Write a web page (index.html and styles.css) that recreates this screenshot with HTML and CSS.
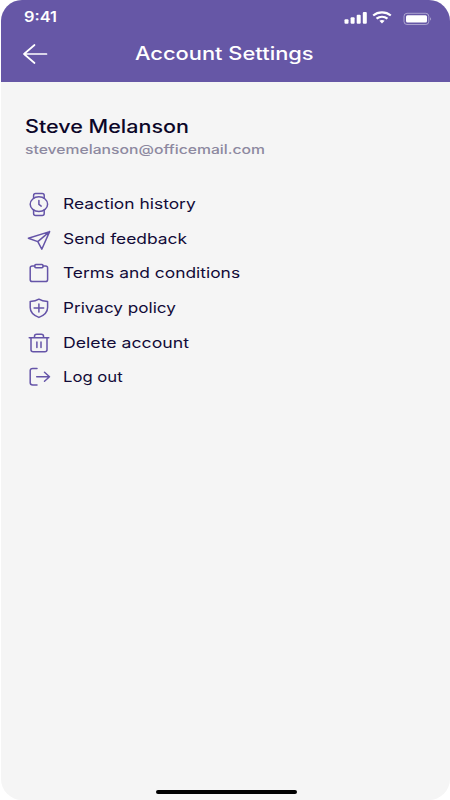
FILE: index.html
```html
<!DOCTYPE html>
<html lang="en">
<head>
    <meta charset="UTF-8">
    <meta name="viewport" content="width=device-width, initial-scale=1.0">
    <title>Account Settings</title>
    <link rel="stylesheet" href="styles.css">
</head>
<body>
    <div class="screen">
        <!-- Header -->
        <header class="header">
            <div class="status-bar">
                <span class="time">9:41</span>
                <svg class="status-icons" width="90" height="16" viewBox="0 0 90 16">
                    <g fill="#fff">
                        <rect x="2.5" y="9.3" width="4" height="4.4" rx="1"/>
                        <rect x="8.6" y="7.2" width="4" height="6.5" rx="1"/>
                        <rect x="14.7" y="4.7" width="4" height="9" rx="1"/>
                        <rect x="20.8" y="2" width="4" height="11.7" rx="1"/>
                        <path d="M37.4 10.8c1.400-1.200 3.800-1.200 5.200 0l-2.600 2.600z"/>
                        <rect x="64" y="5.2" width="21" height="7.4" rx="1.5"/>
                        <path d="M88.2 7.2c1.2.5 1.2 2.8 0 3.3z" opacity=".5"/>
                    </g>
                    <path d="M31.200 5.500c5-4.200 12.600-4.200 17.600 0M34.500 8.700c3.200-2.500 7.800-2.500 11 0" fill="none" stroke="#fff" stroke-width="2.200"/>
                    <rect x="62" y="3.300" width="24.800" height="11.200" rx="3" fill="none" stroke="#fff" opacity=".45"/>
                </svg>
            </div>
            <div class="title-bar">
                <svg class="back" width="26" height="22" viewBox="0 0 26 22">
                    <path d="M24.500 11H2M12.500 2 2 11l10.500 9"/>
                </svg>
                <h1>Account Settings</h1>
            </div>
        </header>

        <!-- User -->
        <section class="user">
            <h2>Steve Melanson</h2>
            <p>stevemelanson@officemail.com</p>
        </section>

        <!-- Menu -->
        <ul class="menu">
            <li>
                <svg class="icon" viewBox="0 0 26 26">
                    <ellipse cx="12.900" cy="13.200" rx="8.700" ry="7.400"/>
                    <path d="M7.600 7.300V4.400q0-2 2-2h6.600q2 0 2 2v2.900M7.600 19.100V22.500q0 2 2 2h6.600q2 0 2-2v-3.400M12.900 9.500v3.900l2.300 1.700"/>
                </svg>
                <span class="reaction">Reaction history</span>
            </li>
            <li>
                <svg class="icon" viewBox="0 0 26 26">
                    <path d="M23.600 5.600 2.400 12.300l9.400 3.300 4 7.600zM23.600 5.600 11.800 15.600"/>
                </svg>
                <span class="feedback">Send feedback</span>
            </li>
            <li>
                <svg class="icon" viewBox="0 0 26 26">
                    <path d="M8.800 5.900H6.300q-2.100 0-2.100 1.800v12q0 1.800 2.100 1.800h13.200q2.100 0 2.100-1.800v-12q0-1.800-2.100-1.800H17"/>
                    <rect x="8.800" y="4.400" width="8.200" height="3.400" rx="1"/>
                </svg>
                <span class="terms">Terms and conditions</span>
            </li>
            <li>
                <svg class="icon" viewBox="0 0 26 26">
                    <path d="M12.900 4.200c-2.500 1.700-5.200 2.200-8.700 2.300v6c0 5.200 3.500 7.900 8.700 9.900 5.200-2 8.700-4.700 8.700-9.900v-6c-3.500-.1-6.200-.6-8.700-2.300zM12.900 8.900v8M8.100 12.900h9.600"/>
                </svg>
                <span class="privacy">Privacy policy</span>
            </li>
            <li>
                <svg class="icon" viewBox="0 0 26 26">
                    <path d="M3.200 7.700h19.600M5 7.700v12q0 2 2.200 2h11.600q2.200 0 2.200-2v-12M8.500 7.700V6.200q0-1.900 2.200-1.900h4.600q2.200 0 2.200 1.900v1.500M10.900 12v5.500M15 12v5.500"/>
                </svg>
                <span class="delete">Delete account</span>
            </li>
            <li>
                <svg class="icon" viewBox="0 0 26 26">
                    <path d="M11 4.400H6.800q-2.600 0-2.600 2.200v12.200q0 2.200 2.600 2.200H11M10.700 12.700h12.800M18.500 8.200l5 4.500-5 4.500"/>
                </svg>
                <span class="logout">Log out</span>
            </li>
        </ul>

        <div class="home-indicator"></div>
    </div>
</body>
</html>
```

FILE: styles.css
```css
* {
    margin: 0;
    padding: 0;
    box-sizing: border-box;
}

body {
    background-color: #fff;
    font-family: Inter, 'Noto Sans', sans-serif;
    color: #120b38;
}

.screen {
    display: flex;
    flex-direction: column;
    width: 449px;
    height: 800px;
    margin-left: 1px;
    background-color: #f5f5f5;
    border-radius: 21px;
    overflow: hidden;
}

/* Header */
.header {
    height: 82px;
    background-color: #6657a6;
    color: #fff;
}

.status-bar {
    display: flex;
    justify-content: space-between;
    height: 34px;
    padding: 7px 18px 0 22.500px;
}

.status-icons {
    margin-top: 3px;
}

.time,
.title-bar h1,
.user h2,
.user p,
.menu span {
    display: block;
    white-space: nowrap;
    transform-origin: left center;
}

.time {
    font-size: 14px;
    font-weight: 600;
    line-height: 20px;
    transform: scaleX(1.17);
}

.title-bar {
    display: flex;
    align-items: center;
    height: 40px;
    padding-left: 21px;
}

.back {
    fill: none;
    stroke: #fff;
    stroke-width: 1.7;
    stroke-linecap: round;
    stroke-linejoin: round;
}

.title-bar h1 {
    margin-left: 87px;
    font-size: 18px;
    font-weight: 500;
    line-height: 24px;
    transform: scaleX(1.215);
}

/* User */
.user {
    padding: 33px 24px 0;
}

.user h2 {
    font-size: 18px;
    font-weight: 500;
    line-height: 24px;
    color: #0c0628;
    transform: scaleX(1.195);
}

.user p {
    font-size: 12.5px;
    font-weight: 500;
    line-height: 20px;
    margin-top: 1px;
    color: #8d89a0;
    transform: scaleX(1.257);
}

/* Menu */
.menu {
    margin-top: 27px;
    padding-left: 25px;
    list-style: none;
}

.menu li {
    display: flex;
    align-items: center;
    height: 34.6px;
}

.icon {
    width: 26px;
    height: 26px;
    margin-right: 11px;
    fill: none;
    stroke: #6554a8;
    stroke-width: 1.5;
    stroke-linecap: round;
    stroke-linejoin: round;
}

.menu span {
    font-size: 14.5px;
    line-height: 20px;
    transform: scaleX(1.2);
}

.menu .privacy {
    transform: scaleX(1.18);
}

.menu .delete {
    transform: scaleX(1.22);
}

.menu .logout {
    transform: scaleX(1.15);
}

.home-indicator {
    width: 141px;
    height: 4px;
    margin: auto auto 6px 155px;
    background-color: #000;
    border-radius: 2px;
}
```
